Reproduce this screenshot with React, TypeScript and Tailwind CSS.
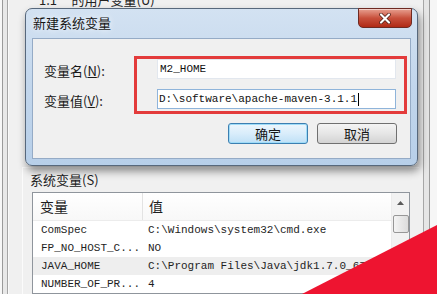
import React from 'react';

const CJK = '"Noto Sans CJK SC", "Noto Sans", sans-serif';
const MONO = '"Liberation Mono", "Noto Sans CJK SC", monospace';

const ROWS = [
  { name: 'ComSpec', value: 'C:\\Windows\\system32\\cmd.exe', active: false },
  { name: 'FP_NO_HOST_C...', value: 'NO', active: false },
  { name: 'JAVA_HOME', value: 'C:\\Program Files\\Java\\jdk1.7.0_67', active: true },
  { name: 'NUMBER_OF_PR...', value: '4', active: false },
];

function Label({ text, hotkey }: { text: string; hotkey: string }) {
  return (
    <span className="text-[13px] text-[#1a1a1a]" style={{ fontFamily: CJK }}>
      {text}(<span className="underline">{hotkey}</span>):
    </span>
  );
}

export default function App() {
  return (
    <div
      className="relative w-[437px] h-[294px] overflow-hidden bg-[#f0f0f0] flex"
      style={{ fontFamily: CJK }}
    >
      {/* left frame of the environment variables window */}
      <div className="w-[9px] flex shrink-0">
        <div className="w-[2px] bg-[#f7f7f7]" />
        <div className="w-[1px] bg-[#9a9a9a]" />
        <div className="w-[4px] bg-[#e8e8e8]" />
        <div className="w-[1px] bg-[#a5a5a5]" />
        <div className="w-[1px] bg-[#fafafa]" />
      </div>

      {/* window body */}
      <div className="flex-1 flex flex-col">
        <div className="h-[8px] overflow-hidden">
          <div className="-mt-[8px] pl-[30px] text-[13px] leading-[16px] text-[#222]">
            1.1&nbsp;&nbsp;&nbsp;&nbsp;&nbsp;的用户变量(U)
          </div>
        </div>
        <div className="h-[162px]" />
        <div className="ml-[13px] mr-[4px] flex-1 border-l border-t border-[#fbfbfb] flex flex-col">
          <div className="pl-[7px] pt-[3px] h-[24px] text-[13px] leading-[18px] text-[#222]">
            系统变量(<span>S</span>)
          </div>
          <div className="ml-[9px] mr-[9px] flex-1 border border-[#8f959c] bg-white flex">
            <div className="flex-1 flex flex-col">
              <div className="h-[28px] flex border-b border-[#ececec] bg-gradient-to-b from-white to-[#f8f8f8]">
                <div className="w-[110px] pl-[7px] flex items-center border-r border-[#e3e3e3] text-[14px] text-[#1e1e1e]">
                  变量
                </div>
                <div className="pl-[6px] flex items-center text-[14px] text-[#1e1e1e]">值</div>
              </div>
              {ROWS.map((r) => (
                <div
                  key={r.name}
                  className={`h-[18px] flex items-center text-[11px] text-[#1e1e1e] ${r.active ? 'bg-[#eeeeee]' : ''}`}
                  style={{ fontFamily: MONO }}
                >
                  <div className="w-[110px] pl-[8px] whitespace-nowrap overflow-hidden">{r.name}</div>
                  <div className="pl-[5px] whitespace-nowrap">{r.value}</div>
                </div>
              ))}
            </div>
            {/* scrollbar */}
            <div className="w-[18px] bg-[#f2f2f2] border-l border-[#ececec] flex flex-col items-center">
              <div className="h-[19px] flex items-center justify-center">
                <svg width="7" height="4" viewBox="0 0 7 4">
                  <polygon points="3.5,0 7,4 0,4" fill="#5a5a5a" />
                </svg>
              </div>
              <div className="mt-[3px] w-[16px] h-[18px] rounded-[2px] border border-[#979797] bg-gradient-to-r from-[#f4f4f4] to-[#dcdcdc]" />
            </div>
          </div>
        </div>
      </div>

      {/* right frame */}
      <div className="w-[14px] flex shrink-0">
        <div className="w-[1px] bg-[#a7a7a7]" />
        <div className="w-[5px] bg-[#e6e6e6]" />
        <div className="w-[1px] bg-[#9a9a9a]" />
        <div className="flex-1 bg-[#f6f6f6]" />
      </div>

      {/* 新建系统变量 dialog */}
      <div className="absolute left-[25px] top-[8px] w-[393px] h-[158px] rounded-[7px] border border-[#57687c] bg-gradient-to-b from-[#d3e2f2] via-[#c2d6ec] to-[#b7cfe9] shadow-[2px_5px_8px_rgba(0,0,0,0.45)] flex flex-col">
        <div className="relative h-[29px] pl-[7px] pt-[6px] text-[13px] leading-[16px] text-[#151515] [text-shadow:0_0_6px_#ffffff]">
          新建系统变量
          <div className="absolute top-[-1px] right-[5px] w-[54px] h-[20px] rounded-b-[5px] border border-[#6e2a22] bg-gradient-to-b from-[#e7a091] via-[#c8503c] to-[#b02914] flex items-center justify-center shadow-[inset_0_1px_0_rgba(255,255,255,0.5)]">
            <svg width="12" height="11" viewBox="0 0 12 11">
              <path d="M2 1.5 L10 9.5 M10 1.5 L2 9.5" stroke="#4a1a12" strokeWidth="3.6" strokeLinecap="round" />
              <path d="M2 1.5 L10 9.5 M10 1.5 L2 9.5" stroke="#ffffff" strokeWidth="2.2" strokeLinecap="round" />
            </svg>
          </div>
        </div>

        <div className="relative mx-[6px] h-[121px] border border-[#95abc6] bg-[#f0f0f0] pt-[20px] pl-[11px]">
          <div className="h-[20px] flex items-center">
            <div className="w-[113px]">
              <Label text="变量名" hotkey="N" />
            </div>
            <div
              className="w-[239px] h-[20px] bg-white border border-[#e2e7ee] pl-[2px] flex items-center text-[11px] text-[#111]"
              style={{ fontFamily: MONO }}
            >
              M2_HOME
            </div>
          </div>
          <div className="mt-[10px] h-[20px] flex items-center">
            <div className="w-[113px]">
              <Label text="变量值" hotkey="V" />
            </div>
            <div
              className="w-[239px] h-[20px] bg-white border border-[#8fb4da] pl-[1px] flex items-center text-[11px] text-[#111]"
              style={{ fontFamily: MONO }}
            >
              D:\software\apache-maven-3.1.1
              <span className="ml-[1px] w-[1px] h-[13px] bg-black" />
            </div>
          </div>
          <div className="mt-[14px] flex justify-end gap-[9px] pr-[13px]">
            <div className="w-[80px] h-[21px] rounded-[3px] border border-[#3c7fb1] bg-gradient-to-b from-[#edf6fc] via-[#d9edfb] to-[#bfe0f6] shadow-[inset_0_0_0_1px_#9fdcf8] flex items-center justify-center text-[13px] text-[#151515]">
              确定
            </div>
            <div className="w-[80px] h-[21px] rounded-[3px] border border-[#707070] bg-gradient-to-b from-[#f4f4f4] via-[#e6e6e6] to-[#d3d3d3] flex items-center justify-center text-[13px] text-[#151515]">
              取消
            </div>
          </div>

          {/* red highlight annotation */}
          <div className="absolute left-[101px] top-[17px] w-[273px] h-[58px] border-[3px] border-[#e33b3b]" />
        </div>
      </div>

      {/* red corner banner */}
      <svg className="absolute right-0 bottom-0" width="135" height="69" viewBox="0 0 135 69">
        <polygon points="0,69 135,0 135,69" fill="#ee1430" />
      </svg>
    </div>
  );
}
